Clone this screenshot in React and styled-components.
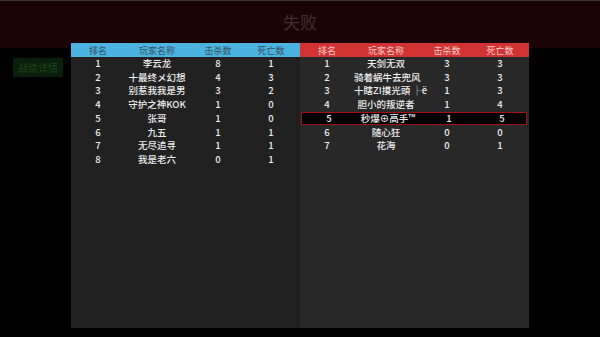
import React from 'react'
import styled, { createGlobalStyle } from 'styled-components'

const GlobalStyle = createGlobalStyle`
  html, body {
    margin: 0;
    padding: 0;
    background: #000;
  }
  body {
    font-family: "Noto Sans CJK SC", "Noto Sans", sans-serif;
  }
`

const blueTeam = [
  [1, '李云龙', 8, 1],
  [2, '十最终メ幻想', 4, 3],
  [3, '别惹我我是男', 3, 2],
  [4, '守护之神KOK', 1, 0],
  [5, '张哥', 1, 0],
  [6, '九五', 1, 1],
  [7, '无尽追寻', 1, 1],
  [8, '我是老六', 0, 1],
]

const redTeam = [
  [1, '天剑无双', 3, 3],
  [2, '骑着蜗牛去兜风', 3, 3],
  [3, '十瞎ZI摸光頭 ├ё', 1, 3],
  [4, '胆小的叛逆者', 1, 4],
  [5, '秒爆⊕高手™', 1, 5],
  [6, '随心狂', 0, 0],
  [7, '花海', 0, 1],
]

const ME = 5

const App = () => {
  return (
    <Page>
      <GlobalStyle />
      <TitleBar>失败</TitleBar>
      <Body>
        <Side>
          <DetailButton>战绩详情</DetailButton>
        </Side>
        <Board team="blue" rows={blueTeam} />
        <Board team="red" rows={redTeam} me={ME} />
      </Body>
    </Page>
  )
}

const Board = ({ team, rows, me }) => (
  <Panel $team={team}>
    <HeadRow $team={team}>
      <Cell>排名</Cell>
      <Cell>玩家名称</Cell>
      <Cell>击杀数</Cell>
      <Cell>死亡数</Cell>
    </HeadRow>
    {rows.map((r) => (
      <Row key={r[0]} $mine={r[0] === me}>
        <Cell>{r[0]}</Cell>
        <Cell>{r[1]}</Cell>
        <Cell>{r[2]}</Cell>
        <Cell>{r[3]}</Cell>
      </Row>
    ))}
  </Panel>
)

export default App

const Page = styled.div`
  width: 600px;
  height: 337px;
  overflow: hidden;
  background: linear-gradient(#1a0406 0, #1a0406 48px, #010101 48px);
`

const TitleBar = styled.div`
  height: 41px;
  padding-bottom: 1px;
  border-top: 1px solid #3a3434;
  display: flex;
  align-items: center;
  justify-content: center;
  font-size: 17px;
  line-height: 17px;
  color: #3f2e2f;
`

const Body = styled.div`
  display: grid;
  grid-template-columns: 71px 229px 229px;
  height: 285px;
`

const Side = styled.div`
  padding: 15px 0 0 13px;
`

const DetailButton = styled.div`
  width: 50px;
  height: 19px;
  background: #0a1f0b;
  color: #1d4420;
  font-size: 10px;
  line-height: 19px;
  text-align: center;
  border-radius: 1px;
`

const Panel = styled.div`
  background: ${(p) => (p.$team === 'blue' ? '#212121' : '#282828')};
  box-shadow: ${(p) => (p.$team === 'blue' ? 'inset -4px 0 0 #1e1e1e' : 'none')};
  color: #ececec;
`

const grid = `
  display: grid;
  grid-template-columns: 54px 64px 58px 48px;
  align-items: center;
  text-align: center;
  white-space: nowrap;
`

const HeadRow = styled.div`
  ${grid}
  height: 14px;
  font-size: 9px;
  background: ${(p) => (p.$team === 'blue' ? '#4ab3df' : '#d13232')};
  color: ${(p) => (p.$team === 'blue' ? '#39525f' : '#f5cccc')};
`

const Row = styled.div`
  ${grid}
  height: 13.7px;
  font-size: 9.5px;
  font-weight: 500;
  box-sizing: border-box;
  background: ${(p) => (p.$mine ? '#000' : 'transparent')};
  border: ${(p) => (p.$mine ? '1px solid #a30f12' : 'none')};
  margin: ${(p) => (p.$mine ? '0 2px 0 1px' : '0')};
`

const Cell = styled.div`
  line-height: 1;
`
